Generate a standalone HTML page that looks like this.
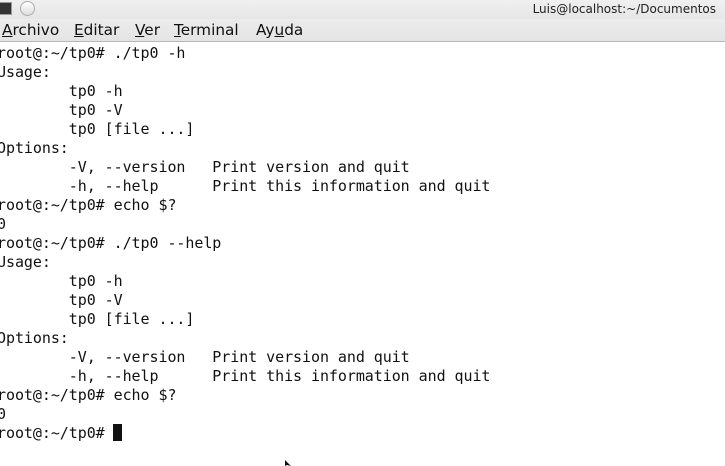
<!DOCTYPE html>
<html><head><meta charset="utf-8"><style>
html,body{margin:0;padding:0;width:725px;height:466px;overflow:hidden;background:#fff;font-family:"DejaVu Sans","Liberation Sans",sans-serif}
#title{position:absolute;left:0;top:0;width:725px;height:19px;background:linear-gradient(#f0f0f0,#e6e6e6)}
#title .t{position:absolute;right:9px;top:2px;font-size:12px;color:#222}
#icon{position:absolute;left:-2px;top:2px;width:12px;height:11px;background:#333;border:1px solid #999}
#circ{position:absolute;left:20px;top:1px;width:13px;height:13px;border-radius:50%;background:linear-gradient(#fff,#ddd);border:1px solid #aaa}
#menu{position:absolute;left:0;top:19px;width:725px;height:22px;background:linear-gradient(#ececec,#e4e4e4);border-bottom:1px solid #b8b8b8}
#menu span{position:absolute;top:2px;font-size:15.3px;color:#111}
#term{position:absolute;left:-3px;top:44px;margin:0;font-family:"DejaVu Sans Mono","Liberation Mono",monospace;font-size:15px;letter-spacing:-0.06px;line-height:19px;color:#111;white-space:pre}
#cur{position:absolute;left:113px;top:424px;width:9px;height:17px;background:#111}
</style></head><body>
<div id="title"><div id="icon"></div><div id="circ"></div><span class="t">Luis@localhost:~/Documentos</span></div>
<div id="menu"><span style="left:2px"><u>A</u>rchivo</span><span style="left:74px"><u>E</u>ditar</span><span style="left:135px"><u>V</u>er</span><span style="left:174px"><u>T</u>erminal</span><span style="left:256px">Ay<u>u</u>da</span></div>
<pre id="term">root@:~/tp0# ./tp0 -h
Usage:
        tp0 -h
        tp0 -V
        tp0 [file ...]
Options:
        -V, --version   Print version and quit
        -h, --help      Print this information and quit
root@:~/tp0# echo $?
0
root@:~/tp0# ./tp0 --help
Usage:
        tp0 -h
        tp0 -V
        tp0 [file ...]
Options:
        -V, --version   Print version and quit
        -h, --help      Print this information and quit
root@:~/tp0# echo $?
0
root@:~/tp0# </pre>
<div id="cur"></div>
<svg style="position:absolute;left:285px;top:460px" width="8" height="6"><path d="M0 0 L0 6 L2 5 L6 6 Z" fill="#111"/></svg>
</body></html>
